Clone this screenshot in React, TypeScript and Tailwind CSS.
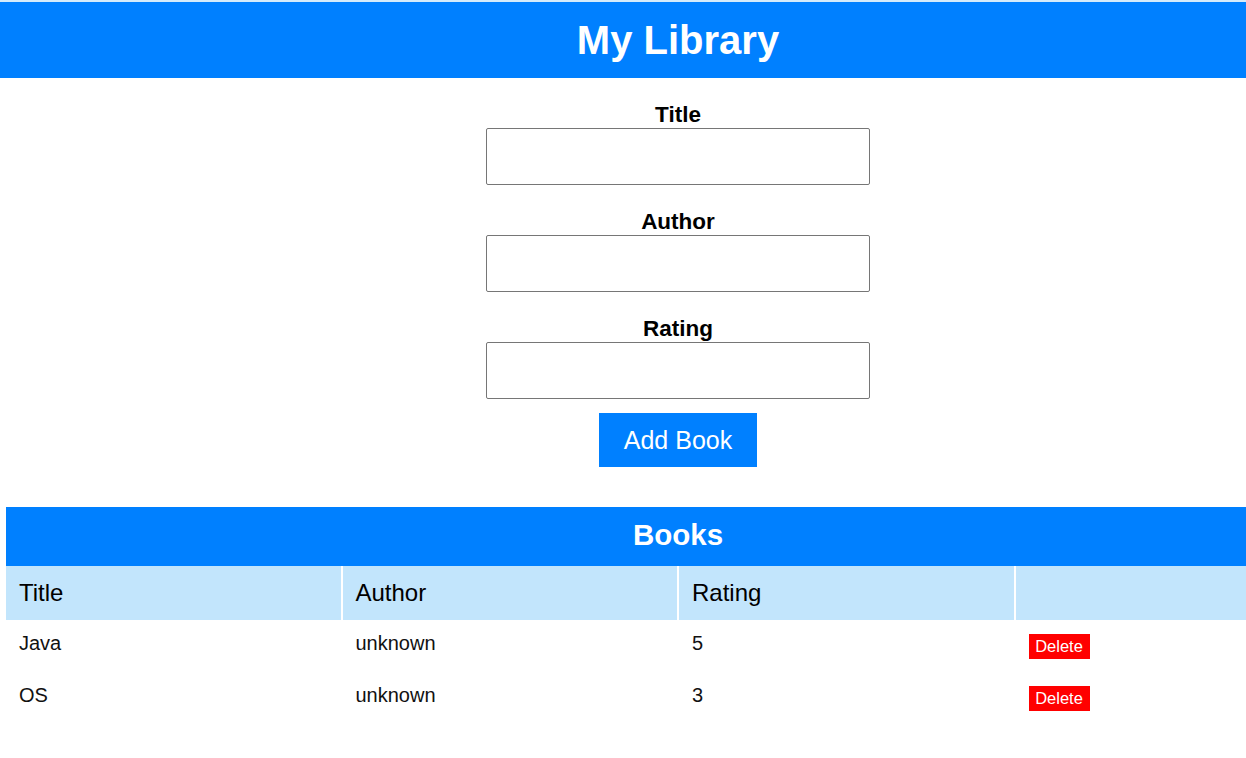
import React from "react";

const books = [
  { title: "Java", author: "unknown", rating: "5" },
  { title: "OS", author: "unknown", rating: "3" },
];

function Field({ label }: { label: string }) {
  return (
    <div className="flex flex-col items-center">
      <div className="h-[25px] text-[22.5px] leading-[29px] font-bold text-black">{label}</div>
      <input
        type="text"
        aria-label={label}
        className="mt-[3px] h-[57px] w-[384px] rounded-[2px] border border-[#767676] bg-white px-2 outline-none"
      />
    </div>
  );
}

export default function App() {
  return (
    <div className="w-full overflow-hidden bg-white" style={{ fontFamily: '"Liberation Sans", Arial, sans-serif' }}>
      <div className="w-[1356px]">
        <div className="h-[2px] bg-[#d4ebfb]" />
        <header className="flex h-[76px] items-center justify-center bg-[#0080ff]">
          <h1 className="text-[40px] font-bold leading-none text-white">My Library</h1>
        </header>

        <form className="mt-[22px] flex flex-col items-center gap-[22px]" onSubmit={(e) => e.preventDefault()}>
          <Field label="Title" />
          <Field label="Author" />
          <Field label="Rating" />
        </form>
        <div className="mt-[14px] flex justify-center">
          <button className="h-[54px] w-[158px] bg-[#0080ff] pt-[2px] text-[25px] text-white">Add Book</button>
        </div>

        <div className="ml-[6px] mt-[40px] w-[1344px]">
          <div className="flex h-[59px] items-center justify-center bg-[#0080ff] pb-[3px]">
            <h2 className="text-[29.5px] font-bold leading-none text-white">Books</h2>
          </div>
          <div className="grid grid-cols-4 gap-x-[2px]">
            {["Title", "Author", "Rating", ""].map((h, i) => (
              <div key={i} className="flex h-[54px] items-center bg-[#c2e5fc] pl-[13px] text-[24px] text-black">
                {h}
              </div>
            ))}
            {books.map((b) => (
              <React.Fragment key={b.title}>
                <div className="flex h-[52px] items-center pb-[6px] pl-[13px] text-[20px] text-[#111]">{b.title}</div>
                <div className="flex h-[52px] items-center pb-[6px] pl-[13px] text-[20px] text-[#111]">{b.author}</div>
                <div className="flex h-[52px] items-center pb-[6px] pl-[13px] text-[20px] text-[#111]">{b.rating}</div>
                <div className="flex h-[52px] items-center pl-[13px]">
                  <button className="h-[25px] w-[61px] bg-[#ff0000] text-[16.5px] leading-none text-white">Delete</button>
                </div>
              </React.Fragment>
            ))}
          </div>
        </div>
      </div>
    </div>
  );
}
